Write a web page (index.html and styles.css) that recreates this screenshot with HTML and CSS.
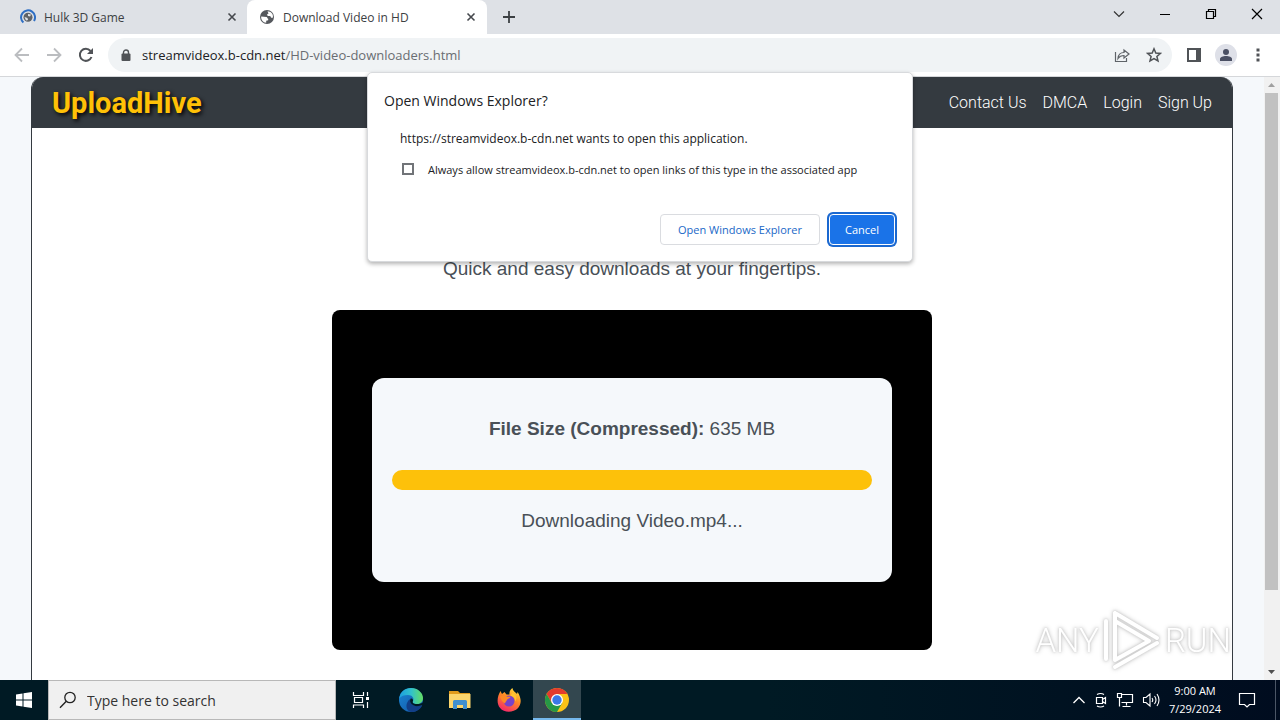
FILE: index.html
```html
<!DOCTYPE html>
<html lang="en">
<head>
  <meta charset="utf-8">
  <meta name="viewport" content="width=device-width, initial-scale=1.0">
  <title>Download Video in HD</title>
  <link rel="stylesheet" href="styles.css">
</head>
<body>
  <div class="tab-strip">
    <div class="tab">
      <svg class="favicon" viewBox="0 0 16 16">
        <path d="M3.400 13.600A7 7 0 1 1 14 12" fill="none" stroke="#2f6fc4" stroke-width="2"/>
        <circle cx="8" cy="8.200" r="4.500" fill="#5f6368"/>
        <path d="M4.500 8l3 1 .5 2-2 .5zM8 5l3 .5-1 2-2-.5z" fill="#dee1e6"/>
      </svg>
      <span class="tab-title">Hulk 3D Game</span>
      <button class="tab-btn" aria-label="Close tab"><svg width="10" height="10" viewBox="0 0 10 10"><path d="M1.500 1.500l7 7M8.500 1.500l-7 7" stroke="#45484d" stroke-width="1.600"/></svg></button>
    </div>
    <div class="tab active">
      <svg class="favicon" viewBox="0 0 16 16">
        <circle cx="8" cy="8" r="7" fill="#55585d"/>
        <path d="M2.200 7.400l5.200.5c1.200.2.700 1.600 1.800 1.900v1.400l-2 .5v2C4 13.500 1.800 10.500 2.200 7.400zM8.500 2.200l2.300.6c3 1.200 3.600 4.200 3 6l-1.600-.1-1-1.700H8.700L8 5.500l1.500-1z" fill="#fff"/>
      </svg>
      <span class="tab-title">Download Video in HD</span>
      <button class="tab-btn" aria-label="Close tab"><svg width="10" height="10" viewBox="0 0 10 10"><path d="M1.500 1.500l7 7M8.500 1.500l-7 7" stroke="#45484d" stroke-width="1.600"/></svg></button>
    </div>
    <button class="new-tab" aria-label="New tab"><svg width="12" height="12" viewBox="0 0 12 12"><path d="M6 0v12M0 6h12" stroke="#3c4043" stroke-width="1.800"/></svg></button>
    <div class="window-controls">
      <button aria-label="Search tabs"><svg width="12" height="12" viewBox="0 0 12 12"><path d="M1 3.500l5 5 5-5" fill="none" stroke="#333" stroke-width="1.200"/></svg></button>
      <button aria-label="Minimize"><svg width="12" height="12" viewBox="0 0 12 12"><path d="M1 6.500h10" stroke="#000"/></svg></button>
      <button aria-label="Restore"><svg width="12" height="12" viewBox="0 0 12 12"><path d="M1.500 3.500h7v7h-7zM3.500 3.500v-2h7v7h-2" fill="none" stroke="#000" stroke-width="1.200"/></svg></button>
      <button aria-label="Close"><svg width="12" height="12" viewBox="0 0 12 12"><path d="M1 1l10 10M11 1L1 11" stroke="#000" stroke-width="1.200"/></svg></button>
    </div>
  </div>

  <div class="toolbar">
    <button aria-label="Back"><svg width="16" height="16" viewBox="0 0 16 16"><path d="M15 8H2M8 1.500L1.500 8 8 14.500" fill="none" stroke="#bbbdc0" stroke-width="1.800"/></svg></button>
    <button aria-label="Forward"><svg width="16" height="16" viewBox="0 0 16 16"><path d="M1 8h13M8 1.500L14.500 8 8 14.500" fill="none" stroke="#bbbdc0" stroke-width="1.800"/></svg></button>
    <button aria-label="Reload"><svg width="16" height="16" viewBox="0 0 16 16"><path d="M13.500 10A6 6 0 1 1 12.500 4" fill="none" stroke="#505357" stroke-width="2"/><path d="M15 1v6H9z" fill="#505357"/></svg></button>
    <div class="address">
      <svg width="10" height="13" viewBox="0 0 10 13"><path d="M2.500 5V3.500a2.500 2.500 0 0 1 5 0V5" fill="none" stroke="#505357" stroke-width="1.400"/><rect x="0.500" y="4.500" width="9" height="7.500" rx="1" fill="#505357"/></svg>
      <span class="url"><b>streamvideox.b-cdn.net</b>/HD-video-downloaders.html</span>
      <button aria-label="Share"><svg width="16" height="16" viewBox="0 0 16 16"><path d="M1.500 5v9.500h11V11M4 11.500c.3-4 2.500-6 6-6V3l5 4-5 4V8.500c-3 0-4.500.8-6 3z" fill="none" stroke="#5f6368" stroke-width="1.200"/></svg></button>
      <button aria-label="Bookmark"><svg width="16" height="16" viewBox="0 0 16 16"><path d="M8 1.800l1.800 4.200 4.600.4-3.500 3 1.100 4.500L8 11.500l-4 2.400 1.100-4.500-3.500-3L6.200 6z" fill="none" stroke="#505357" stroke-width="1.500"/></svg></button>
    </div>
    <button aria-label="Side panel"><svg width="14" height="14" viewBox="0 0 14 14"><path d="M0 0h14v14H0zM2 2v10h7V2z" fill="#505357" fill-rule="evenodd"/></svg></button>
    <button class="avatar" aria-label="Profile"><svg width="14" height="14" viewBox="0 0 14 14"><circle cx="7" cy="4" r="3" fill="#4a4f63"/><path d="M1 13v-2c0-2 3-3 6-3s6 1 6 3v2z" fill="#4a4f63"/></svg></button>
    <button aria-label="Menu"><svg width="4" height="14" viewBox="0 0 4 14"><path d="M.5.5h3v3h-3zM.5 5.500h3v3h-3zM.5 10.500h3v3h-3z" fill="#505357"/></svg></button>
  </div>

  <div class="viewport">
    <div class="page">
      <div class="container">
        <header class="site-header">
          <a class="logo" href="#">UploadHive</a>
          <nav class="site-nav">
            <a href="#">Contact Us</a>
            <a href="#">DMCA</a>
            <a href="#">Login</a>
            <a href="#">Sign Up</a>
          </nav>
        </header>
        <main class="content">
          <p class="tagline">Quick and easy downloads at your fingertips.</p>
          <div class="player">
            <div class="download-box">
              <p><strong>File Size (Compressed):</strong> 635 MB</p>
              <div class="progress"></div>
              <p>Downloading Video.mp4...</p>
            </div>
          </div>
        </main>
      </div>
      <div class="watermark">
        <span>ANY</span>
        <svg width="58" height="62" viewBox="0 0 58 62">
          <path d="M3 12v38M12 4l42 25M12 58l42-24M12 4v46M12 12l34 20-34 19" fill="none" stroke="#fff" stroke-width="4" stroke-linejoin="round" stroke-linecap="round"/>
        </svg>
        <span>RUN</span>
      </div>
    </div>
    <div class="scrollbar">
      <svg width="16" height="16" viewBox="0 0 16 16"><path d="M4 10l3.500-4 3.500 4z" fill="#a0a0a0"/></svg>
      <div class="track"><div class="thumb"></div></div>
      <svg width="16" height="16" viewBox="0 0 16 16"><path d="M4 6l3.500 4L11 6z" fill="#505050"/></svg>
    </div>
  </div>

  <footer class="taskbar">
    <button class="task start" aria-label="Start"><svg width="16" height="16" viewBox="0 0 16 16"><path d="M0 2.400L6.500 1.500v6H0zM7.500 1.300L16 0v7.500H7.500zM0 8.500h6.500v6L0 13.600zM7.500 8.500H16V16l-8.500-1.300z" fill="#fff"/></svg></button>
    <label class="search">
      <svg width="18" height="18" viewBox="0 0 18 18"><circle cx="11" cy="6.500" r="5.200" fill="none" stroke="#222" stroke-width="1.300"/><path d="M7.300 10.300L1 16.800" stroke="#222" stroke-width="1.400"/></svg>
      <input type="text" placeholder="Type here to search" aria-label="Type here to search">
    </label>
    <button class="task" aria-label="Task view"><svg width="18" height="18" viewBox="0 0 18 18"><path d="M1.500 1v3.500h10V1M1.500 17v-3h10v3M2.500 6.500h8v5h-8zM15.500 1v4M15.500 11v6" fill="none" stroke="#fff" stroke-width="1.200"/><path d="M14 6h3v3h-3z" fill="#fff"/></svg></button>
    <div class="pinned">
      <button class="task" aria-label="Edge"><svg width="26" height="26" viewBox="0 0 26 26">
        <defs>
          <linearGradient id="edgeTop" x1="0" y1="0" x2="1" y2="0"><stop offset="0" stop-color="#1c9ee0"/><stop offset="0.500" stop-color="#31c1cc"/><stop offset="1" stop-color="#65de62"/></linearGradient>
          <linearGradient id="edgeLow" x1="0" y1="0" x2="1" y2="1"><stop offset="0" stop-color="#1b87d5"/><stop offset="1" stop-color="#1253a4"/></linearGradient>
        </defs>
        <circle cx="13" cy="13" r="12" fill="url(#edgeLow)"/>
        <path d="M1.200 11.500C2 5 7 1 13 1c7 0 12 5 12 10 0 4-3 6-6 6-4 0-5-1.500-4-3 1.500-3-1-6-5-6-4 0-7 1-8.800 3.500z" fill="url(#edgeTop)"/>
        <path d="M12.800 11.500c-1.500 3 .5 6.500 4.500 7.500 2.700.6 5.200-.3 6.500-1 .4-.2.700.2.400.6C22.500 22 19 25 14 25c-6 0-8-9-1.200-13.500z" fill="#123f88"/>
        <path d="M12.800 11.500c-2 3 .5 6.500 4.500 7.500 2.700.6 5.200-.3 6.500-1l1.500 1.800V15c-1.500 1.400-3.500 2-6.300 2-4 0-5-1.500-4-3 .5-1-.5-3-2.200-2.500z" fill="#001a24"/>
      </svg></button>
      <button class="task" aria-label="File Explorer"><svg width="24" height="20" viewBox="0 0 24 20"><path d="M1 1h9l2 2h10v5H1z" fill="#e09b1c"/><path d="M1 4h21.500v14H1z" fill="#fbd56c"/><path d="M5 19v-7.500q0-1.500 1.500-1.500h11q1.500 0 1.500 1.500V19h-4v-4H9v4z" fill="#3f8fcf"/></svg></button>
      <button class="task" aria-label="Firefox"><svg width="24" height="26" viewBox="0 0 24 26">
        <defs><linearGradient id="fox" x1="0.800" y1="0" x2="0.300" y2="1"><stop offset="0" stop-color="#ffe13d"/><stop offset="0.450" stop-color="#ff8a25"/><stop offset="1" stop-color="#f5256b"/></linearGradient></defs>
        <path d="M3.500 4l1.500 3 2.500-2 2 2.500h3C12 5 13.500 2 15.500 1c.3 3 3 4 4.500 6l.6-2c5 8 3 13 .5 16-5 5-14 5-18 0C-1 16 .5 9 3.500 4z" fill="url(#fox)"/>
        <circle cx="12" cy="14" r="5.500" fill="#7942c9"/>
        <path d="M3 9.500c3-1.500 5-1 7.500.2h3c-.5 2-3 1.800-3.500 3-.5 1.800-1.500 1.500-2 3.800C5 15 4 12 3 9.500z" fill="#ff8a25"/>
        <path d="M13.500 9c3 0 5 2.500 4.500 5.500 3-3 1-8-2.500-9z" fill="#ffc530"/>
      </svg></button>
      <button class="task current" aria-label="Chrome"><svg width="26" height="26" viewBox="0 0 26 26">
        <circle cx="13" cy="13" r="12" fill="#fbc116"/>
        <path d="M2.600 7A12 12 0 0 1 23.400 7H13L7.800 16z" fill="#e33b2e"/>
        <path d="M2.600 7A12 12 0 0 0 13 25l5.200-9H7.800z" fill="#269846"/>
        <circle cx="13" cy="13" r="6" fill="#fff"/><circle cx="13" cy="13" r="4.700" fill="#3b78e7"/>
      </svg></button>
    </div>
    <div class="tray">
      <svg width="14" height="14" viewBox="0 0 14 14"><path d="M1.500 10L7 4.500l5.500 5.500" fill="none" stroke="#fff" stroke-width="1.300"/></svg>
      <svg width="14" height="16" viewBox="0 0 14 16"><path d="M2.500 5.500h6v6h-6zM8.500 7.500l3-2v6l-3-2M3 2.500q3.500-2 7 0M3 14q3.500 2 7 0" fill="none" stroke="#fff" stroke-width="1.200"/></svg>
      <svg width="18" height="16" viewBox="0 0 18 16"><path d="M5.500 2.500h11v8h-11M10.500 10.500v3M6.500 14.500h8M1.500 1.500h4v4h-4zM3.500 5.500v9" fill="none" stroke="#fff" stroke-width="1.200"/></svg>
      <svg width="18" height="16" viewBox="0 0 18 16"><path d="M1.500 5.500h2.500L8 2v12l-4-3.500H1.500zM10 6q1.500 2 0 4M12.500 4q3 4 0 8M15 2q4 6 0 12" fill="none" stroke="#fff" stroke-width="1.100"/></svg>
      <div class="clock"><span>9:00 AM</span><span>7/29/2024</span></div>
      <svg class="notify" width="18" height="18" viewBox="0 0 18 18"><path d="M1.500 2.500h15v11h-5L9 16l-2.500-2.500h-5z" fill="none" stroke="#fff" stroke-width="1.200"/></svg>
    </div>
  </footer>

  <div class="dialog" role="dialog" aria-labelledby="dialog-title">
    <h2 id="dialog-title">Open Windows Explorer?</h2>
    <p>https://streamvideox.b-cdn.net wants to open this application.</p>
    <div class="allow">
      <input type="checkbox" id="always-allow">
      <label for="always-allow">Always allow streamvideox.b-cdn.net to open links of this type in the associated app</label>
    </div>
    <div class="dialog-buttons">
      <button class="btn">Open Windows Explorer</button>
      <button class="btn primary">Cancel</button>
    </div>
  </div>
</body>
</html>
```
FILE: styles.css
```css
* {
    box-sizing: border-box;
}
body {
    margin: 0;
    height: 100vh;
    display: flex;
    flex-direction: column;
    overflow: hidden;
    position: relative;
    font-family: "Open Sans", "Noto Sans", sans-serif;
    font-size: 12px;
    color: #202124;
}
button {
    border: 0;
    padding: 0;
    background: none;
    font-family: inherit;
    display: flex;
    align-items: center;
    justify-content: center;
}
svg {
    display: block;
    flex-shrink: 0;
}

/* Tabs */
.tab-strip {
    display: flex;
    height: 34px;
    flex-shrink: 0;
    background-color: #dee1e6;
}
.tab {
    display: flex;
    align-items: center;
    width: 240px;
    padding: 0 8px 0 12px;
    color: #3c4043;
}
.tab:first-child {
    width: 247px;
    padding: 0 7px 0 20px;
}
.tab.active {
    background-color: #fff;
    border-radius: 8px 8px 0 0;
}
.favicon {
    width: 16px;
    height: 16px;
    margin-right: 8px;
}
.tab-title {
    flex: 1;
    white-space: nowrap;
}
.tab-btn {
    width: 16px;
    height: 16px;
}
.new-tab {
    width: 28px;
    margin-left: 8px;
}
.window-controls {
    display: flex;
    margin-left: auto;
    height: 28px;
}
.window-controls button {
    width: 46px;
}

/* Toolbar */
.toolbar {
    display: flex;
    align-items: center;
    height: 43px;
    flex-shrink: 0;
    padding: 0 6px;
    border-bottom: 1px solid #d5d7da;
    background-color: #fff;
}
.toolbar button {
    width: 32px;
    height: 32px;
}
.toolbar .address {
    flex: 1;
    display: flex;
    align-items: center;
    height: 34px;
    margin: 0 6px;
    padding: 0 2px 0 13px;
    border-radius: 17px;
    background-color: #f0f3f5;
}
.url {
    flex: 1;
    margin-left: 11px;
    font-size: 13px;
    color: #696d72;
}
.url b {
    font-weight: 400;
    color: #202124;
}
.toolbar .avatar {
    width: 22px;
    height: 22px;
    margin: 0 5px;
    border-radius: 50%;
    background-color: #dee0e8;
}

/* Page */
.viewport {
    flex: 1;
    display: flex;
    min-height: 0;
}
.page {
    flex: 1;
    display: flex;
    justify-content: center;
    position: relative;
    background-color: #f5f8fb;
    font-family: "Liberation Sans", Arial, sans-serif;
}
.container {
    width: 100%;
    max-width: 1202px;
    border: 1px solid #343a40;
    border-width: 0 1px;
    border-radius: 12px 12px 0 0;
    background-color: #fff;
    overflow: hidden;
}
.site-header {
    display: flex;
    align-items: center;
    justify-content: space-between;
    height: 51px;
    padding: 0 20px;
    background-color: #343a40;
    font-family: Roboto, sans-serif;
}
.site-header a {
    text-decoration: none;
}
.logo {
    font-size: 29px;
    font-weight: 700;
    color: #ffc107;
    text-shadow: 2px 2px 4px #000;
}
.site-nav {
    display: flex;
    gap: 16px;
}
.site-nav a {
    font-size: 16px;
    font-weight: 300;
    line-height: 20px;
    color: #fff;
}
.content {
    display: flex;
    flex-direction: column;
    align-items: center;
    padding-top: 129px;
    font-size: 19px;
    line-height: 24px;
    color: #495057;
    text-align: center;
}
.content p {
    margin: 0;
}
.player {
    display: flex;
    align-items: center;
    width: 100%;
    max-width: 600px;
    height: 340px;
    margin-top: 29px;
    padding: 0 40px;
    border-radius: 8px;
    background-color: #000;
}
.download-box {
    flex: 1;
    padding: 39px 20px 49px;
    border-radius: 12px;
    background-color: #f5f8fb;
}
.progress {
    height: 20px;
    margin: 29px 0 19px;
    border-radius: 10px;
    background-color: #fdc10a;
}
.watermark {
    position: absolute;
    right: 33px;
    bottom: 9px;
    display: flex;
    align-items: center;
    gap: 4px;
    font-family: Roboto, sans-serif;
    font-size: 33px;
    font-weight: 300;
    color: #fff;
    filter: drop-shadow(0 0 1px #ccc) drop-shadow(0 0 2px #ccc);
}
.scrollbar {
    display: flex;
    flex-direction: column;
    width: 16px;
    background-color: #f1f1f1;
}
.track {
    flex: 1;
    padding: 0 2px 0 1px;
}
.thumb {
    height: 87%;
    background-color: #c1c1c1;
}

/* Taskbar */
.taskbar {
    display: flex;
    height: 40px;
    flex-shrink: 0;
    background: linear-gradient(90deg, #001a24, #001a24 60%, #000c1f);
}
.task {
    width: 49px;
}
.task.start {
    width: 48px;
}
.task.current {
    width: 48px;
    background-color: #33474f;
    border-bottom: 2px solid #76b9ed;
    padding-top: 2px;
}
.pinned {
    display: flex;
    margin-left: 1px;
}
.search {
    display: flex;
    align-items: center;
    gap: 10px;
    width: 288px;
    padding: 0 12px 0 10px;
    border: 1px solid #b8b8b8;
    background-color: #f0f0f0;
}
.search input {
    flex: 1;
    min-width: 0;
    border: 0;
    padding: 0;
    outline: none;
    background: none;
    font-family: inherit;
    font-size: 14px;
}
.search input::placeholder {
    color: #333;
    opacity: 1;
}
.tray {
    display: flex;
    align-items: center;
    gap: 8px;
    margin-left: auto;
    padding-right: 19px;
    border-right: 1px solid #4b5666;
    margin-right: 4px;
    color: #fff;
}
.clock {
    display: flex;
    flex-direction: column;
    align-items: center;
    width: 54px;
    font-size: 11px;
    line-height: 18px;
}
.notify {
    margin-left: 8px;
}

/* External app prompt */
.dialog {
    position: absolute;
    top: 72px;
    left: 0;
    right: 0;
    width: 546px;
    margin: 0 auto;
    padding: 18px 17px 16px 16px;
    border: 1px solid #d8dadd;
    border-radius: 5px;
    background-color: #fff;
    box-shadow: 0 2px 4px rgba(0, 0, 0, 0.3);
}
.dialog h2 {
    margin: 0 0 18px;
    font-size: 14px;
    font-weight: 400;
    line-height: 20px;
}
.dialog p {
    margin: 0 0 10px 16px;
    font-size: 12px;
    line-height: 20px;
}
.allow {
    display: flex;
    align-items: center;
    height: 20px;
    margin-left: 18px;
    font-size: 11px;
}
.allow input {
    appearance: none;
    width: 12px;
    height: 12px;
    margin: 0 14px 0 0;
    border: 2px solid #717478;
}
.dialog-buttons {
    display: flex;
    justify-content: flex-end;
    gap: 9px;
    margin-top: 35px;
}
.btn {
    width: 160px;
    height: 31px;
    border: 1px solid #dadce0;
    border-radius: 4px;
    font-size: 11px;
    color: #1a68c7;
}
.btn.primary {
    width: 66px;
    border-color: #fff;
    background-color: #1a73e8;
    color: #fff;
    box-shadow: 0 0 0 2px #1a68d0;
}
```
